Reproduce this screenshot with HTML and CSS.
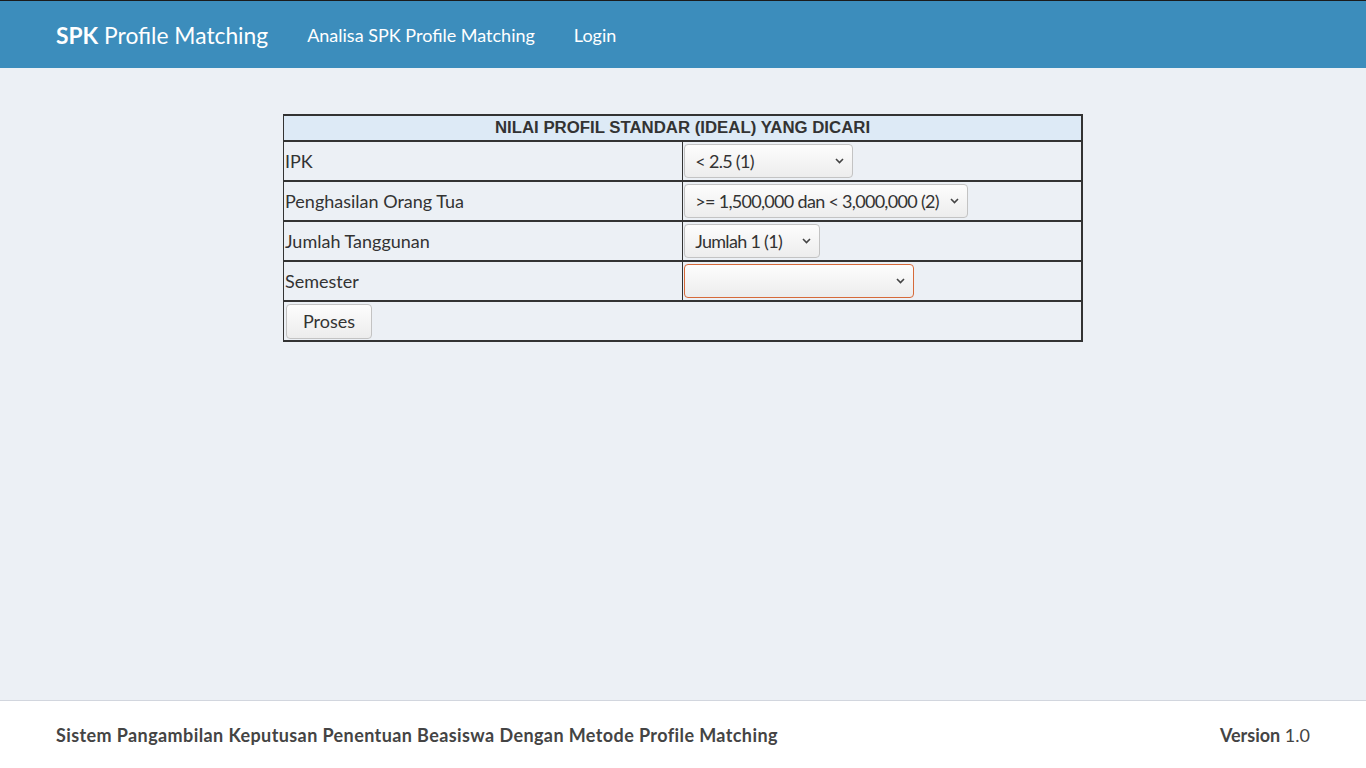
FILE: index.html
```html
<!DOCTYPE html>
<html lang="id">
<head>
<meta charset="utf-8">
<title>SPK Profile Matching</title>
<link rel="stylesheet" href="styles.css">
</head>
<body>
<div class="wrapper">
  <header class="navbar">
    <a class="brand" href="#"><b>SPK</b> Profile Matching</a>
    <nav class="nav">
      <a href="#">Analisa SPK Profile Matching</a>
      <a href="#">Login</a>
    </nav>
  </header>
  <main class="content">
    <form class="profil-form">
      <table class="profil">
        <thead>
          <tr><th colspan="2">NILAI PROFIL STANDAR (IDEAL) YANG DICARI</th></tr>
        </thead>
        <tbody>
          <tr>
            <td class="label">IPK</td>
            <td class="field"><span class="sel-wrap"><select class="sel w1"><option>&lt; 2.5 (1)</option></select><svg class="chev" width="9" height="6" viewBox="0 0 9 6"><path d="M1 1l3.5 3.5L8 1" fill="none" stroke="#444" stroke-width="1.6"/></svg></span></td>
          </tr>
          <tr>
            <td class="label">Penghasilan Orang Tua</td>
            <td class="field"><span class="sel-wrap"><select class="sel w2"><option>&gt;= 1,500,000 dan &lt; 3,000,000 (2)</option></select><svg class="chev" width="9" height="6" viewBox="0 0 9 6"><path d="M1 1l3.5 3.5L8 1" fill="none" stroke="#444" stroke-width="1.6"/></svg></span></td>
          </tr>
          <tr>
            <td class="label">Jumlah Tanggunan</td>
            <td class="field"><span class="sel-wrap"><select class="sel w3"><option>Jumlah 1 (1)</option></select><svg class="chev" width="9" height="6" viewBox="0 0 9 6"><path d="M1 1l3.5 3.5L8 1" fill="none" stroke="#444" stroke-width="1.6"/></svg></span></td>
          </tr>
          <tr>
            <td class="label">Semester</td>
            <td class="field"><span class="sel-wrap"><select class="sel w4 invalid"><option></option></select><svg class="chev" width="9" height="6" viewBox="0 0 9 6"><path d="M1 1l3.5 3.5L8 1" fill="none" stroke="#444" stroke-width="1.6"/></svg></span></td>
          </tr>
          <tr>
            <td colspan="2" class="actions"><button type="button" class="btn">Proses</button></td>
          </tr>
        </tbody>
      </table>
    </form>
  </main>
  <footer class="footer">
    <strong class="footer-title">Sistem Pangambilan Keputusan Penentuan Beasiswa Dengan Metode Profile Matching</strong>
    <span class="version"><b>Version</b> 1.0</span>
  </footer>
</div>
</body>
</html>
```
FILE: styles.css
```css
html, body {
  margin: 0;
  padding: 0;
}
body {
  font-family: Lato, "Source Sans Pro", "Liberation Sans", sans-serif;
  color: #333;
  font-size: 18px;
}
.wrapper {
  display: flex;
  flex-direction: column;
  height: 768px;
}
.navbar {
  background: #3c8dbc;
  border-top: 1px solid #1b1b1b;
  height: 68px;
  display: flex;
  align-items: center;
  padding-left: 56px;
  box-sizing: border-box;
}
.brand {
  color: #fff;
  text-decoration: none;
  font-size: 22.8px;
  margin-right: 39px;
}
.nav {
  display: flex;
  gap: 39px;
}
.nav a {
  color: #fff;
  text-decoration: none;
  font-size: 18px;
}
.content {
  flex: 1;
  background: #ecf0f5;
  padding-top: 46px;
}
.profil {
  width: 800px;
  margin: 0 auto;
  border-collapse: collapse;
  table-layout: fixed;
}
.profil th {
  background: #ddeaf6;
  font-family: "Liberation Sans", Arial, sans-serif;
  font-weight: bold;
  font-size: 16.8px;
  color: #333;
  height: 26px;
  padding: 0;
  border: 2px solid #333;
  border-left-width: 1px;
  box-sizing: border-box;
}
.profil td {
  border-top: 2px solid #333;
  border-bottom: 2px solid #333;
  border-left: 1px solid #333;
  border-right: 1px solid #333;
  padding: 1px;
  height: 40px;
  box-sizing: border-box;
  vertical-align: middle;
}
.profil tr:first-child td {
  border-top: 0;
}
.profil td.label {
  width: 50%;
  font-size: 18px;
}
.profil td:last-child {
  border-right-width: 2px;
}
.sel-wrap {
  position: relative;
  display: inline-block;
  vertical-align: middle;
}
.sel {
  -webkit-appearance: none;
  appearance: none;
  height: 34px;
  font-family: inherit;
  font-size: 18px;
  letter-spacing: -0.7px;
  color: #333;
  padding: 0 20px 0 10px;
  border: 1px solid #c3c3c3;
  border-radius: 4px;
  background: linear-gradient(#fdfdfd, #ededed);
  display: block;
  box-sizing: border-box;
}
.sel.invalid {
  border-color: #d66a3a;
}
.w1 { width: 169px; }
.w2 { width: 284px; }
.w3 { width: 136px; }
.w4 { width: 230px; }
.chev {
  position: absolute;
  right: 9px;
  top: 14px;
  pointer-events: none;
}
.actions {
  padding: 1px 2px !important;
}
.btn {
  width: 86px;
  height: 35px;
  font-family: inherit;
  font-size: 18px;
  color: #333;
  border: 1px solid #c3c3c3;
  border-radius: 4px;
  background: linear-gradient(#fdfdfd, #ececec);
  display: block;
}
.footer {
  background: #fff;
  border-top: 1px solid #d2d6de;
  height: 68px;
  box-sizing: border-box;
  display: flex;
  align-items: center;
  justify-content: space-between;
  padding: 0 56px;
  color: #444;
  font-size: 18px;
}
.footer-title {
  letter-spacing: 0.4px;
}
.version b {
  font-weight: bold;
}
```
